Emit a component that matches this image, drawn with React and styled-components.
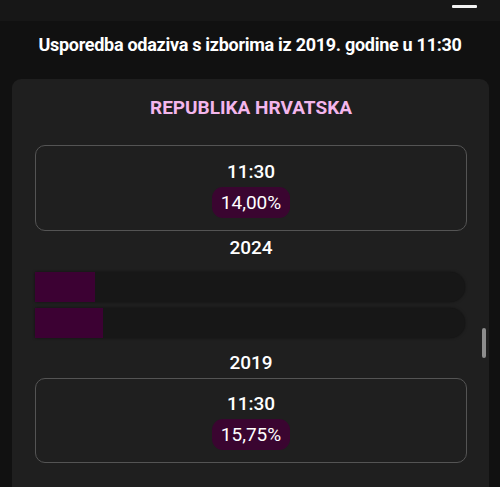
import React from 'react';
import styled, { createGlobalStyle } from 'styled-components';

const GlobalStyle = createGlobalStyle`
  html, body {
    margin: 0;
    padding: 0;
    background: #111111;
    font-family: Roboto, "Noto Sans", sans-serif;
    color: #ffffff;
  }
`;

const Page = styled.div`
  width: 500px;
  height: 487px;
  overflow: hidden;
  display: flex;
  flex-direction: column;
  background: #111111;
`;

const TopBar = styled.div`
  height: 21px;
  flex: 0 0 21px;
  background: #171717;
  display: flex;
  justify-content: flex-end;
  align-items: flex-start;
  padding-right: 23px;
`;

const MenuLine = styled.span`
  display: block;
  width: 25px;
  height: 3px;
  margin-top: 5px;
  border-radius: 1px;
  background: #f2f2f2;
`;

const Heading = styled.h1`
  margin: 0;
  padding: 12px 0 0;
  height: 46px;
  box-sizing: border-box;
  font-size: 18px;
  line-height: 24px;
  font-weight: 700;
  text-align: center;
  letter-spacing: -0.28px;
`;

const Card = styled.div`
  position: relative;
  margin: 12px 11px 0 12px;
  flex: 1 0 auto;
  background: #1f1f1f;
  border-radius: 9px 9px 0 0;
  padding: 17px 22px 0 23px;
  display: flex;
  flex-direction: column;
`;

const Region = styled.h2`
  margin: 0 0 25px;
  font-size: 19px;
  line-height: 24px;
  font-weight: 700;
  text-align: center;
  color: #f3b6ec;
`;

const TimeBox = styled.div`
  border: 1px solid #545454;
  border-radius: 10px;
  padding: ${p => p.$top}px 0 12px;
  display: flex;
  flex-direction: column;
  align-items: center;
  gap: 4px;
`;

const Time = styled.div`
  font-size: 19px;
  line-height: 22px;
  font-weight: 500;
`;

const Percent = styled.div`
  background: #3a0530;
  border-radius: 11px;
  padding: 4px 9px;
  font-size: 19px;
  line-height: 23px;
  font-weight: 400;
`;

const Year = styled.div`
  font-size: 19px;
  line-height: 22px;
  font-weight: 500;
  text-align: center;
  margin: ${p => p.$mt}px 0 ${p => p.$mb}px;
`;

const Bars = styled.div`
  display: flex;
  flex-direction: column;
  gap: 6px;
  padding-right: 2px;
`;

const Track = styled.div`
  height: 30px;
  border-radius: 0 15px 15px 0;
  background: #171717;
  box-shadow: 0 0 3px rgba(0, 0, 0, 0.5);
  overflow: hidden;
`;

const Fill = styled.div`
  height: 100%;
  background: #3c0133;
`;

const ScrollThumb = styled.div`
  position: absolute;
  right: 3px;
  top: 249px;
  width: 4px;
  height: 30px;
  border-radius: 2px;
  background: #8c8c8c;
`;

const Bar = ({ value }) => (
  <Track>
    <Fill style={{ width: `${value}%` }} />
  </Track>
);

export default function App() {
  return (
    <>
      <GlobalStyle />
      <Page>
        <TopBar>
          <MenuLine />
        </TopBar>
        <Heading>Usporedba odaziva s izborima iz 2019. godine u 11:30</Heading>
        <Card>
          <Region>REPUBLIKA HRVATSKA</Region>
          <TimeBox $top={15}>
            <Time>11:30</Time>
            <Percent>14,00%</Percent>
          </TimeBox>
          <Year $mt={6} $mb={13}>2024</Year>
          <Bars>
            <Bar value={14} />
            <Bar value={15.75} />
          </Bars>
          <Year $mt={14} $mb={4}>2019</Year>
          <TimeBox $top={14}>
            <Time>11:30</Time>
            <Percent>15,75%</Percent>
          </TimeBox>
          <ScrollThumb />
        </Card>
      </Page>
    </>
  );
}
